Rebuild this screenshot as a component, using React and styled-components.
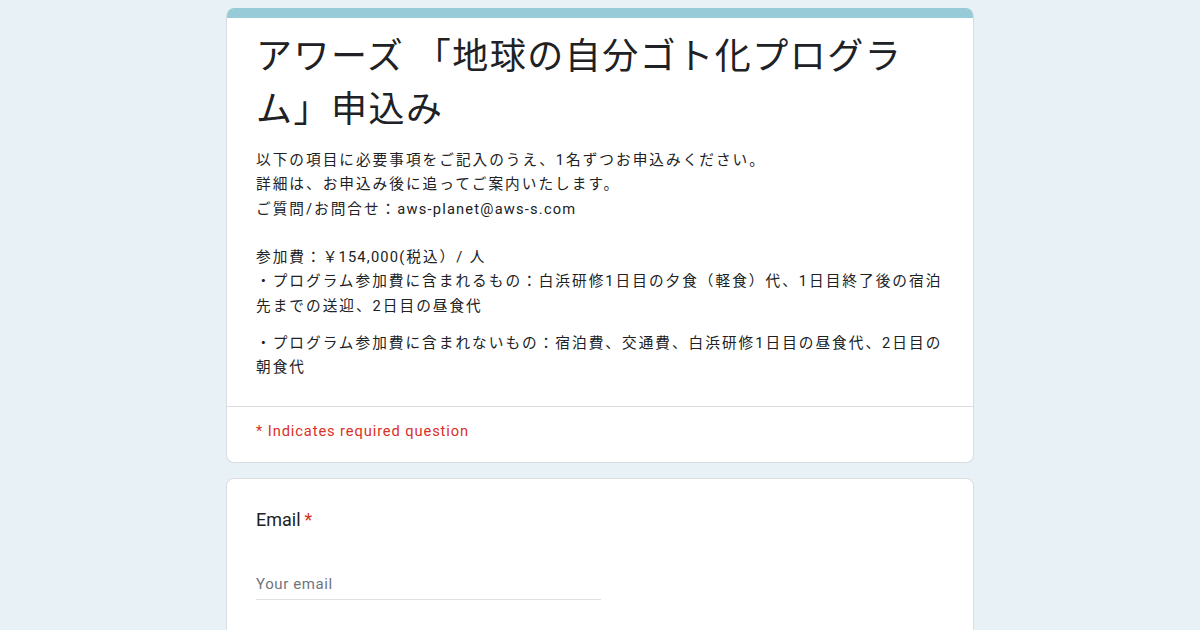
import React from 'react'
import styled, { createGlobalStyle } from 'styled-components'

const COLOR_BG = '#e8f1f5'
const COLOR_ACCENT = '#97cbd8'
const COLOR_BORDER = '#dadce0'
const COLOR_TEXT = '#202124'
const COLOR_REQUIRED = '#d93025'
const COLOR_HINT = '#70757a'
const FONT = 'Roboto, "Noto Sans CJK JP", sans-serif'

const GlobalStyle = createGlobalStyle`
  html, body { margin: 0; padding: 0; background: ${COLOR_BG}; }
  body { font-family: ${FONT}; color: ${COLOR_TEXT}; }
  * { box-sizing: border-box; }
`

const Page = styled.div`
  display: flex;
  flex-flow: column;
  align-items: center;
  gap: 15px;
  padding-top: 8px;
  height: 630px;
  overflow: hidden;
`

const Card = styled.div`
  width: 748px;
  background: #fff;
  border: 1px solid ${COLOR_BORDER};
  border-radius: 8px;
  overflow: hidden;
  flex-shrink: 0;
  ${p => p.$accent && `
    border-top: none;
    &::before {
      content: '';
      display: block;
      height: 10px;
      margin: 0 -1px;
      background: ${COLOR_ACCENT};
    }
  `}
`

const Header = styled.div`
  padding: 13px 29px 26px;
  border-bottom: 1px solid ${COLOR_BORDER};
`

const Title = styled.h1`
  margin: 0 0 11px;
  padding-right: 40px;
  font-size: 36px;
  line-height: 53px;
  font-weight: 400;
  letter-spacing: 1.5px;
`

const Description = styled.div`
  font-size: 14.67px;
  line-height: 24.3px;
  letter-spacing: 2px;
  & > p { margin: 0; white-space: pre-wrap; }
  & > p + p { margin-top: 13px; }
`

const Latin = styled.span`
  letter-spacing: 1.2px;
`

const RequiredNote = styled.div`
  padding: 13px 29px 20px;
  font-size: 14.67px;
  line-height: 22px;
  letter-spacing: 0.9px;
  color: ${COLOR_REQUIRED};
`

const Question = styled.div`
  padding: 29px 29px 40px;
`

const Label = styled.div`
  font-size: 18px;
  line-height: 24px;
  & > span { color: ${COLOR_REQUIRED}; margin-left: 4px; }
`

const Input = styled.div`
  margin-top: 41px;
  width: 345px;
  padding-bottom: 4px;
  border-bottom: 1px solid #e0e0e0;
  font-size: 15px;
  line-height: 22px;
  letter-spacing: 0.6px;
  color: ${COLOR_HINT};
`

export default function App () {
  return <>
    <GlobalStyle />
    <Page>
      <Card $accent>
        <Header>
          <Title>アワーズ 「地球の自分ゴト化プログラム」申込み</Title>
          <Description>
            <p>
              {'以下の項目に必要事項をご記入のうえ、1名ずつお申込みください。\n詳細は、お申込み後に追ってご案内いたします。\nご質問/お問合せ：'}
              <Latin>aws-planet@aws-s.com</Latin>
              {'\n\n参加費：'}
              <Latin>￥154,000</Latin>
              {'(税込）/ 人\n・プログラム参加費に含まれるもの：白浜研修1日目の夕食（軽食）代、1日目終了後の宿泊先までの送迎、2日目の昼食代'}
            </p>
            <p>・プログラム参加費に含まれないもの：宿泊費、交通費、白浜研修1日目の昼食代、2日目の朝食代</p>
          </Description>
        </Header>
        <RequiredNote>* Indicates required question</RequiredNote>
      </Card>
      <Card>
        <Question>
          <Label>Email<span>*</span></Label>
          <Input>Your email</Input>
        </Question>
      </Card>
    </Page>
  </>
}
